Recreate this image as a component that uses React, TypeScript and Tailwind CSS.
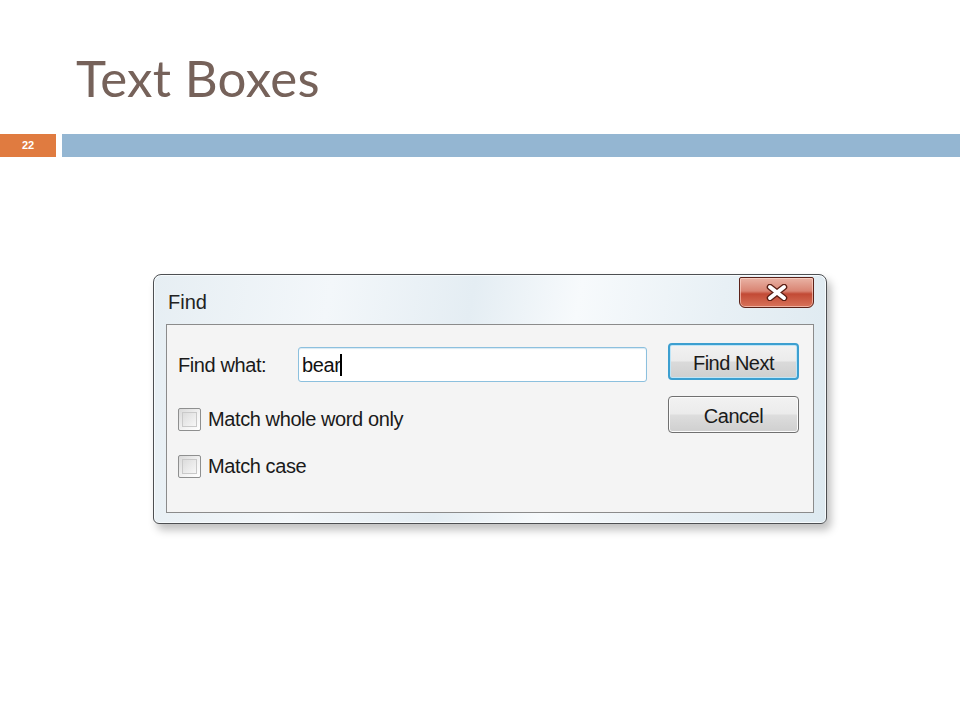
import React from "react";

function CheckRow({ label, className }: { label: string; className?: string }) {
  return (
    <div className={"flex items-center " + (className ?? "")}>
      <div className="w-[23px] h-[23px] rounded-[2px] border border-[#8e8f8f] bg-[linear-gradient(135deg,#d9d9d9_0%,#f4f4f4_60%,#ffffff_100%)] p-[3px]">
        <div className="w-full h-full border border-[#c9c9c9] bg-[linear-gradient(135deg,#dcdcdc,#f7f7f7)]" />
      </div>
      <span className="ml-[7px] text-[20px] leading-[23px] text-[#1a1a1a] tracking-[-0.4px]">{label}</span>
    </div>
  );
}

function WinButton({ label, focused }: { label: string; focused?: boolean }) {
  return (
    <div
      className={
        "w-[131px] h-[37px] rounded-[4px] flex items-center justify-center pt-[2px] text-[20px] text-[#1a1a1a] tracking-[-0.5px] " +
        (focused
          ? "border-2 border-[#3c9fd0] bg-[linear-gradient(180deg,#f2f2f2_0%,#ebebeb_48%,#dadada_52%,#cfcfcf_100%)] shadow-[inset_0_0_0_1px_#bfe5f7]"
          : "border border-[#707070] bg-[linear-gradient(180deg,#f2f2f2_0%,#ebebeb_48%,#dddddd_52%,#cfcfcf_100%)] shadow-[inset_0_0_0_1px_#fbfbfb]")
      }
    >
      {label}
    </div>
  );
}

export default function App() {
  return (
    <div className="w-[960px] h-[720px] bg-white overflow-hidden" style={{ fontFamily: "'Liberation Sans', Arial, sans-serif" }}>
      <div className="pl-[76px] pt-[48px] h-[134px]">
        <h1 className="text-[51px] leading-[60px] text-[#76625a] tracking-[0.3px]" style={{ fontFamily: "Lato, 'Liberation Sans', sans-serif" }}>
          Text Boxes
        </h1>
      </div>

      <div className="flex h-[23px]">
        <div className="w-[56px] bg-[#e07b40] flex items-center justify-center text-white text-[11px] font-bold">22</div>
        <div className="ml-[6px] flex-1 bg-[#94b6d2]" />
      </div>

      <div className="ml-[153px] mt-[117px] w-[674px] h-[250px] rounded-t-[8px] rounded-b-[6px] border border-[#4d4f52] bg-[linear-gradient(100deg,#e6eef3_0%,#f3f7fa_25%,#e4edf3_45%,#f7fafc_60%,#e8f0f5_80%,#dde9f0_100%)] shadow-[4px_6px_8px_rgba(0,0,0,0.25),inset_0_0_0_1px_#f7fbfd] flex flex-col">
        <div className="h-[49px] flex items-start justify-between pl-[14px] pr-[12px]">
          <span className="mt-[12px] text-[20px] text-[#222]">Find</span>
          <div className="mt-[2px] w-[75px] h-[31px] rounded-b-[6px] rounded-t-[2px] border border-[#5b2219] bg-[linear-gradient(180deg,#e9b3a5_0%,#d98473_45%,#c24a35_55%,#d8735a_100%)] shadow-[inset_0_0_0_1px_rgba(255,220,210,0.6)] flex items-center justify-center">
            <svg width="24" height="17" viewBox="0 0 24 17">
              <path d="M5 3 L19 14 M19 3 L5 14" stroke="#5a1e14" strokeWidth="6.5" strokeLinecap="round" />
              <path d="M5 3 L19 14 M19 3 L5 14" stroke="#ffffff" strokeWidth="4" strokeLinecap="round" />
            </svg>
          </div>
        </div>

        <div className="mx-[12px] mb-[10px] flex-1 border border-[#8b8b8b] bg-[#f4f4f4] flex pt-[21px] pl-[11px]">
          <div className="flex flex-col">
            <div className="flex items-center h-[37px]">
              <span className="w-[120px] text-[20px] text-[#1a1a1a] tracking-[-0.4px]">Find what:</span>
              <div className="w-[349px] h-[35px] rounded-[3px] border border-[#8cc0de] bg-white shadow-[inset_0_1px_1px_#d8e8f2] flex items-center pl-[3px]">
                <span className="text-[20px] text-[#111] tracking-[-0.4px]">bear</span>
                <span className="w-[2px] h-[22px] bg-black" />
              </div>
            </div>
            <CheckRow label="Match whole word only" className="mt-[25px]" />
            <CheckRow label="Match case" className="mt-[24px]" />
          </div>
          <div className="ml-[21px] -mt-[3px] flex flex-col gap-[16px]">
            <WinButton label="Find Next" focused />
            <WinButton label="Cancel" />
          </div>
        </div>
      </div>
    </div>
  );
}
